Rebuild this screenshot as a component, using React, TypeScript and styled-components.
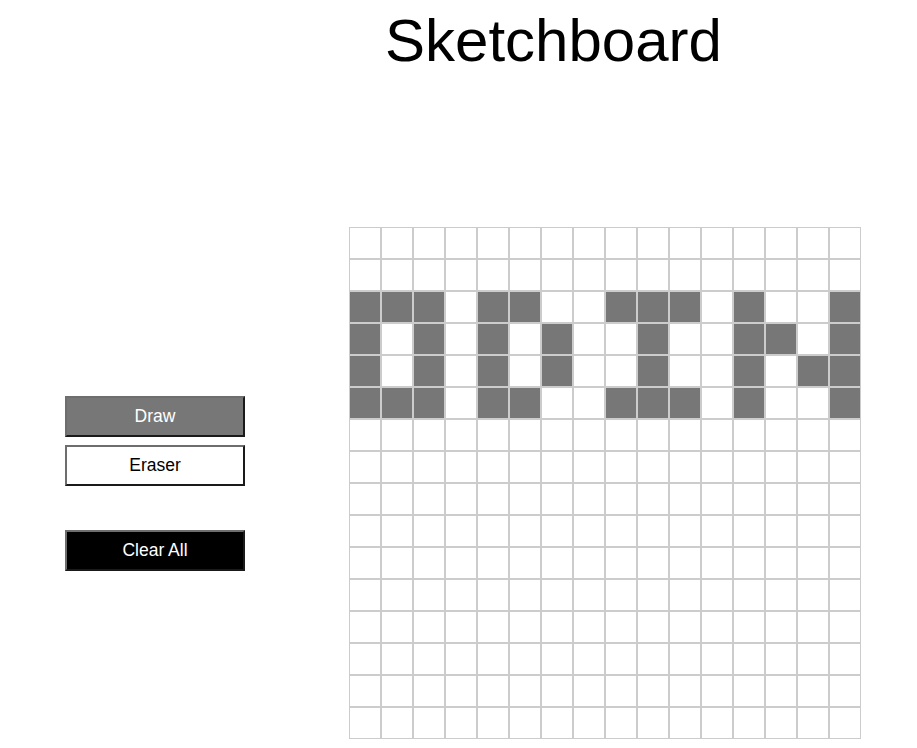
import React, { useState } from 'react'
import styled, { createGlobalStyle } from 'styled-components'

const GlobalStyle = createGlobalStyle`
  html, body {
    margin: 0;
    padding: 0;
    background: #fff;
    font-family: 'Liberation Sans', Arial, Helvetica, sans-serif;
  }
`

const Page = styled.div`
  width: 917px;
  min-height: 748px;
`

const Title = styled.h1`
  margin: 11px 0 0;
  padding-left: 385px;
  font-size: 60px;
  line-height: 60px;
  font-weight: 400;
  color: #000;
`

const Main = styled.div`
  display: flex;
  align-items: center;
  gap: 104px;
  margin-top: 156px;
  padding-left: 65px;
`

const Sidebar = styled.div`
  display: flex;
  flex-direction: column;
  width: 180px;
`

const ToolButton = styled.button<{ $variant: 'active' | 'idle' | 'danger'; $offset?: number }>`
  box-sizing: border-box;
  width: 180px;
  height: 41px;
  margin: ${(p) => p.$offset || 0}px 0 0;
  border-width: 2px;
  border-style: solid;
  border-color: #6e6e6e #1a1a1a #1a1a1a #6e6e6e;
  padding: 0;
  font-family: 'Liberation Sans', Arial, Helvetica, sans-serif;
  font-size: 17.5px;
  cursor: pointer;
  background: ${(p) => (p.$variant === 'active' ? '#777777' : p.$variant === 'danger' ? '#000000' : '#ffffff')};
  color: ${(p) => (p.$variant === 'idle' ? '#000' : '#fff')};
`

const Board = styled.div`
  display: grid;
  grid-template-columns: repeat(16, 32px);
  grid-template-rows: repeat(16, 32px);
`

const Cell = styled.div<{ $filled: boolean }>`
  box-sizing: border-box;
  width: 32px;
  height: 32px;
  border: 1px solid #cccccc;
  background: ${(p) => (p.$filled ? '#777777' : '#ffffff')};
`

const SIZE = 16

// rows 2..5 spell out the letters, column indexes that are filled
const PATTERN: Record<number, number[]> = {
  2: [0, 1, 2, 4, 5, 8, 9, 10, 12, 15],
  3: [0, 2, 4, 6, 9, 12, 13, 15],
  4: [0, 2, 4, 6, 9, 12, 14, 15],
  5: [0, 1, 2, 4, 5, 8, 9, 10, 12, 15],
}

const initialCells = () =>
  Array.from({ length: SIZE * SIZE }, (_, i) => {
    const row = Math.floor(i / SIZE)
    const col = i % SIZE
    return (PATTERN[row] || []).includes(col)
  })

export default function App() {
  const [cells, setCells] = useState<boolean[]>(initialCells)
  const [mode, setMode] = useState<'draw' | 'erase'>('draw')
  const [down, setDown] = useState(false)

  const paint = (i: number) => {
    setCells((prev) => {
      const next = prev.slice()
      next[i] = mode === 'draw'
      return next
    })
  }

  return (
    <Page onMouseUp={() => setDown(false)}>
      <GlobalStyle />
      <Title>Sketchboard</Title>
      <Main>
        <Sidebar>
          <ToolButton $variant={mode === 'draw' ? 'active' : 'idle'} onClick={() => setMode('draw')}>
            Draw
          </ToolButton>
          <ToolButton $variant={mode === 'erase' ? 'active' : 'idle'} $offset={8} onClick={() => setMode('erase')}>
            Eraser
          </ToolButton>
          <ToolButton $variant="danger" $offset={44} onClick={() => setCells(Array(SIZE * SIZE).fill(false))}>
            Clear All
          </ToolButton>
        </Sidebar>
        <Board>
          {cells.map((filled, i) => (
            <Cell
              key={i}
              $filled={filled}
              onMouseDown={() => {
                setDown(true)
                paint(i)
              }}
              onMouseEnter={() => down && paint(i)}
            />
          ))}
        </Board>
      </Main>
    </Page>
  )
}
